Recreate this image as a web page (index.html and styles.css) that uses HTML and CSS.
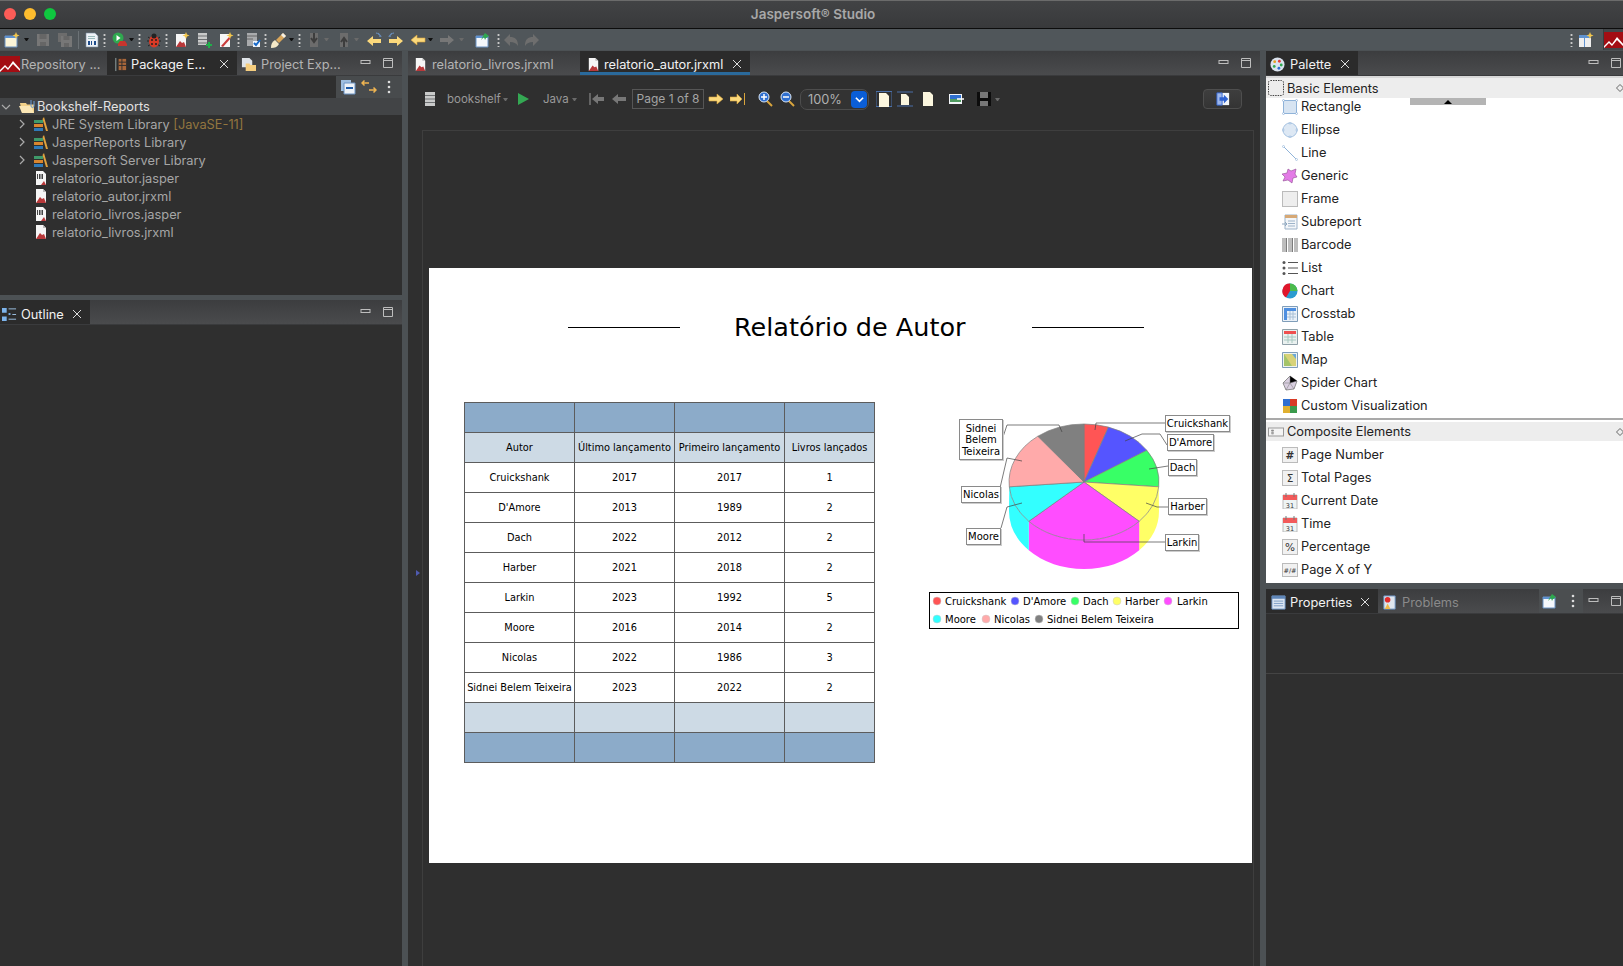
FILE: index.html
```html
<!DOCTYPE html>
<html lang="pt">
<head>
  <meta charset="UTF-8">
  <title>Jaspersoft Studio</title>
  <link rel="stylesheet" href="styles.css">
</head>
<body>
  <!-- icones -->
  <svg class="sprite" xmlns="http://www.w3.org/2000/svg">
    <symbol id="rep" viewBox="0 0 16 16"><path d="M3 1h7l3 3v11H3z" fill="#f6f6f6"/><path d="M10 1v3h3z" fill="#bbb"/><path d="M3 15l4-6 2 2 2-1 2 5z" fill="#b8383a"/></symbol>
    <symbol id="jasper" viewBox="0 0 16 16"><path d="M3 1h7l3 3v11H3z" fill="#f6f6f6"/><path d="M4 4h6v5H4z" fill="#444"/><path d="M5.500 4v5M8 4v5" stroke="#eee"/><path d="M8 15l3-4 2 4z" fill="#b8383a"/></symbol>
    <symbol id="new" viewBox="0 0 16 16"><path d="M1 4h12v11H1z" fill="#fbf5d8" stroke="#6b93c4"/><path d="M1 4h12v2H1z" fill="#5f92d0"/><path d="M12 0l1 2.500 2.500 1-2.500 1-1 2.500-1-2.500-2.500-1 2.500-1z" fill="#f3c74c"/></symbol>
    <symbol id="save" viewBox="0 0 16 16"><path d="M2 2h12v12H2z" fill="#777"/><path d="M4.500 2h7v5h-7zM5 10h6v4H5z" fill="#666"/></symbol>
    <symbol id="saveall" viewBox="0 0 16 16"><path d="M1 1h9v9H1z" fill="#6c6c6c"/><path d="M4 4h11v11H4z" fill="#777"/><path d="M6.500 4h6v4h-6zM7 11h5v4H7z" fill="#666"/></symbol>
    <symbol id="bin" viewBox="0 0 16 16"><path d="M2 1h9l3 3v11H2z" fill="#eef2f7" stroke="#7b8da3" stroke-width=".6"/><path d="M4 4h7v1H4zM4 6h7v1H4z" fill="#9bb"/><path d="M4 9h2v4H4zM7 9h1v4H7zM10 9h2v4h-2z" fill="#1e4d8c"/></symbol>
    <symbol id="run" viewBox="0 0 16 16"><circle cx="6" cy="6" r="5.500" fill="#2fa84f"/><path d="M4.500 3l4 3-4 3z" fill="#fff"/><path d="M6 12l2-3h5l2 3v2H6z" fill="#c8352d"/></symbol>
    <symbol id="bug" viewBox="0 0 16 16"><path d="M2 5l3 2M14 5l-3 2M1 9h3M15 9h-3M2 14l3-2M14 14l-3-2" stroke="#222"/><ellipse cx="8" cy="9.500" rx="5" ry="6" fill="#d83a26"/><circle cx="8" cy="4" r="2.500" fill="#222"/><circle cx="6" cy="8" r="1" fill="#222"/><circle cx="10" cy="8" r="1" fill="#222"/><circle cx="6" cy="12" r="1" fill="#222"/><circle cx="10" cy="12" r="1" fill="#222"/></symbol>
    <symbol id="newrep" viewBox="0 0 16 16"><path d="M2 2h10v13H2z" fill="#f6f6f6"/><path d="M2 15l4-6 2 2 2-1 2 5z" fill="#b8383a"/><path d="M12 0l1 2.500 2.500 1-2.500 1-1 2.500-1-2.500-2.500-1 2.500-1z" fill="#f3c74c"/></symbol>
    <symbol id="dbadd" viewBox="0 0 16 16"><path d="M2 1h9v12H2z" fill="#c9caca"/><path d="M2 4h9M2 7.500h9M2 11h9" stroke="#6e7072"/><path d="M10 12h2v-2h2v2h2v2h-2v2h-2v-2h-2z" fill="#20b04a"/></symbol>
    <symbol id="db" viewBox="0 0 16 16"><path d="M3 1h10v14H3z" fill="#c9caca"/><path d="M3 4.500h10M3 8h10M3 11.500h10" stroke="#6e7072"/></symbol>
    <symbol id="editrep" viewBox="0 0 16 16"><path d="M2 2h10v13H2z" fill="#f6f6f6"/><path d="M3 14L11 5l1.500 1.500L5 15z" fill="#c83a3a"/><path d="M12 0l1 2.500 2.500 1-2.500 1-1 2.500-1-2.500-2.500-1 2.500-1z" fill="#f3c74c"/></symbol>
    <symbol id="server" viewBox="0 0 16 16"><path d="M2 1h10v13H2z" fill="#a9abad"/><path d="M2 4h10M2 7h6" stroke="#666"/><path d="M8 9h7v6H8z" fill="#f2f6fb"/><path d="M9 11l2 2 4-5" stroke="#1769c9" stroke-width="2" fill="none"/></symbol>
    <symbol id="brush" viewBox="0 0 16 16"><path d="M0 16c0-4 1-6 4-8l4 4c-2 3-4 4-8 4z" fill="#f4e9c8"/><path d="M5 8l7-7 3 3-7 7z" fill="#d9a65a"/><path d="M10 3l3 3 2-2-3-3z" fill="#f4f0e6"/></symbol>
    <symbol id="dis1" viewBox="0 0 16 16"><path d="M4 1h8v14H4z" fill="#6c6c6c"/><path d="M8 1v8M5 6l3 4 3-4" stroke="#3d3d3d" stroke-width="2" fill="none"/></symbol>
    <symbol id="dis2" viewBox="0 0 16 16"><path d="M4 1h8v14H4z" fill="#6c6c6c"/><path d="M8 15V7M5 10l3-4 3 4" stroke="#3d3d3d" stroke-width="2" fill="none"/></symbol>
    <symbol id="al" viewBox="0 0 16 16"><path d="M1 8l6-5v3h8v4H7v3z" fill="#fbd97c" stroke="#d9a53d" stroke-width=".6"/></symbol>
    <symbol id="ar" viewBox="0 0 16 16"><path d="M15 8L9 3v3H1v4h8v3z" fill="#fbd97c" stroke="#d9a53d" stroke-width=".6"/></symbol>
    <symbol id="alb" viewBox="0 0 16 16"><path d="M1 9l6-5v3h8v4H7v3z" fill="#fbd97c"/><path d="M10 1c2 0 4 2 4 4M12 1c1 1 3 2 3 4" stroke="#6b93c4" fill="none"/></symbol>
    <symbol id="arb" viewBox="0 0 16 16"><path d="M15 9L9 4v3H1v4h8v3z" fill="#fbd97c"/><path d="M6 1C4 1 2 3 2 5M4 1C3 2 1 3 1 5" stroke="#6b93c4" fill="none"/></symbol>
    <symbol id="gl" viewBox="0 0 16 16"><path d="M1 8l6-5v3h8v4H7v3z" fill="#777"/></symbol>
    <symbol id="gr" viewBox="0 0 16 16"><path d="M15 8L9 3v3H1v4h8v3z" fill="#777"/></symbol>
    <symbol id="glb" viewBox="0 0 16 16"><path d="M3 8l6-5v3h6v4H9v3z" fill="#777"/><path d="M1 2v12" stroke="#777" stroke-width="1.500"/></symbol>
    <symbol id="arb2" viewBox="0 0 16 16"><path d="M12 8L7 3v3H0v4h7v3z" fill="#fbd97c" stroke="#d9a53d" stroke-width=".6"/><path d="M14.500 2v12" stroke="#d9a53d"/></symbol>
    <symbol id="note" viewBox="0 0 16 16"><path d="M1 4h12v11H1z" fill="#f5f8fc" stroke="#6b93c4"/><path d="M1 4h12v2H1z" fill="#5f92d0"/><path d="M10 1l4 3-3 2-1 2-1-3-3 3 2-4z" fill="#2fa84f"/></symbol>
    <symbol id="undo" viewBox="0 0 16 16"><path d="M1 8l6-6v3c5 0 8 2 8 9-2-3-4-4-8-4v4z" fill="#6e6e6e"/></symbol>
    <symbol id="redo" viewBox="0 0 16 16"><path d="M15 8L9 2v3C4 5 1 7 1 14c2-3 4-4 8-4v4z" fill="#6e6e6e"/></symbol>
    <symbol id="persp" viewBox="0 0 16 16"><path d="M1 3h12v12H1z" fill="#eee"/><path d="M1 3h12v3H1zM6 6h1v9H6z" fill="#5f92d0"/><path d="M12 0l1 2.500 2.500 1-2.500 1-1 2.500-1-2.500-2.500-1 2.500-1z" fill="#f3c74c"/></symbol>
    <symbol id="jrs" viewBox="0 0 20 16"><path d="M0 0h20v16H0z" fill="#a30d13"/><path d="M0 14l5-5 3 3 5-7 7 8v2l-7-7-5 6-3-3-5 5z" fill="#fff"/></symbol>
    <symbol id="pkg" viewBox="0 0 16 16"><path d="M3 1v14" stroke="#9aa"/><path d="M6 2h8v12H6z" fill="#a9673a"/><path d="M6 5.500h8M6 9h8M9.500 2v12" stroke="#2e2e2e"/></symbol>
    <symbol id="proj" viewBox="0 0 16 16"><path d="M1 1h8l3 3v7H1z" fill="#dfe3e8"/><path d="M5 7h4l1 1.500h6V15H5z" fill="#f5cd7e"/></symbol>
    <symbol id="collapse" viewBox="0 0 16 16"><path d="M1 1h10v11H1z" fill="#9fbfe0"/><path d="M4 4h11v11H4z" fill="#eef3f8" stroke="#6b93c4"/><path d="M6 9h7" stroke="#1e5ca8" stroke-width="2"/></symbol>
    <symbol id="link" viewBox="0 0 16 16"><path d="M8 4H1M3.500 1.500L1 4l2.500 2.500" stroke="#eeb451" stroke-width="1.500" fill="none"/><path d="M8 11h7M12.500 8.500L15 11l-2.500 2.500" stroke="#eeb451" stroke-width="1.500" fill="none"/></symbol>
    <symbol id="folder" viewBox="0 0 18 16"><path d="M1 4h6l1 1.500h7V14H3z" fill="#f3d188"/><path d="M0 7h12l3 7H3z" fill="#fbe7b5"/><path d="M12 1v6c0 2 3 2 3 0V2" stroke="#6b9bd6" fill="none"/></symbol>
    <symbol id="lib" viewBox="0 0 16 16"><path d="M1 4h9v3H1z" fill="#3f9a6a"/><path d="M1 8h9v3H1z" fill="#d9852e"/><path d="M1 12h9v3H1z" fill="#2f79b7"/><path d="M11 1l4 14h-2L9.500 3z" fill="#e0a23f"/></symbol>
    <symbol id="playg" viewBox="0 0 16 16"><path d="M3 2l11 6-11 6z" fill="#34a853"/></symbol>
    <symbol id="zin" viewBox="0 0 16 16"><path d="M9 10l5 5" stroke="#d9a53d" stroke-width="2"/><circle cx="6" cy="6" r="5" fill="#2f6fd0" stroke="#dbe8f7"/><path d="M3 6h6M6 3v6" stroke="#fff" stroke-width="1.500"/></symbol>
    <symbol id="zout" viewBox="0 0 16 16"><path d="M9 10l5 5" stroke="#d9a53d" stroke-width="2"/><circle cx="6" cy="6" r="5" fill="#2f6fd0" stroke="#dbe8f7"/><path d="M3 6h6" stroke="#fff" stroke-width="1.500"/></symbol>
    <symbol id="pg1" viewBox="0 0 16 16"><path d="M0 .500h16v15H0z" fill="none" stroke="#4a6fa8"/><path d="M3 2h7l3 3v11H3z" fill="#fbf6de"/></symbol>
    <symbol id="pg2" viewBox="0 0 16 16"><path d="M0 1h16M0 15h16" stroke="#4a6fa8"/><path d="M4 3h5l3 3v8H4z" fill="#fbf6de"/></symbol>
    <symbol id="pg3" viewBox="0 0 16 16"><path d="M3 1h7l3 3v11H3z" fill="#fbf6de"/></symbol>
    <symbol id="img" viewBox="0 0 16 16"><path d="M1 3h13v10H1z" fill="#f2f5f9"/><path d="M2 4h11v4H2z" fill="#2f6fd0"/><path d="M2 8h11v3H2z" fill="#4f9a60"/><path d="M9 8h7" stroke="#fff" stroke-width="1.500"/></symbol>
    <symbol id="savek" viewBox="0 0 16 16"><path d="M1 1h14v14H1z" fill="#0c0c0c"/><path d="M4 1h8v6H4zM4 10h8v5H4z" fill="#777"/></symbol>
    <symbol id="exit" viewBox="0 0 16 16"><path d="M5 1h10v14H5z" fill="#f2f5f9"/><path d="M1 1h6v14H1z" fill="#9db6ea" stroke="#2f62d0"/><path d="M4 6h5V3l5 5-5 5v-3H4z" fill="#2f62d0"/></symbol>
    <symbol id="palette" viewBox="0 0 16 16"><circle cx="8" cy="8" r="7.500" fill="#dbe3ee"/><circle cx="5" cy="5" r="1.500" fill="#e8a020"/><circle cx="10" cy="4.500" r="1.500" fill="#e23b3b"/><circle cx="12" cy="8.500" r="1.500" fill="#2fa84f"/><circle cx="9.500" cy="12" r="1.500" fill="#2f6fd0"/><circle cx="4.500" cy="10" r="1.500" fill="#2fa84f"/></symbol>
    <symbol id="props" viewBox="0 0 16 16"><path d="M1 1h14v14H1z" fill="#dce6f2" stroke="#6b93c4"/><path d="M1 1h14v3H1z" fill="#5f86b8"/><path d="M3 6.500h10M3 9h10M3 11.500h10" stroke="#7b9cc4"/></symbol>
    <symbol id="probs" viewBox="0 0 16 16"><path d="M2 1h12v14H2z" fill="#dfe6ee" stroke="#6b93c4"/><circle cx="6" cy="5" r="3" fill="#e22b2b"/><path d="M3 15l3-6 3 6z" fill="#f0b84a"/></symbol>
    <symbol id="outline" viewBox="0 0 16 16"><path d="M0 1h5v5H0zM0 10h5v5H0z" fill="#7db4ec"/><path d="M7 2h8M7 13h8" stroke="#9fc4e8"/><path d="M7 7.500h2" stroke="#7db4ec" stroke-width="2"/><path d="M11 8h4" stroke="#9fc4e8"/></symbol>
    <symbol id="p-rect" viewBox="0 0 16 16"><rect x="1.500" y="1.500" width="13" height="13" fill="#d7e4f2" stroke="#8fb3d9"/><g fill="#fff" stroke="#7ea6d3" stroke-width=".6"><circle cx="1.500" cy="1.500" r="1"/><circle cx="14.500" cy="1.500" r="1"/><circle cx="1.500" cy="14.500" r="1"/><circle cx="14.500" cy="14.500" r="1"/></g></symbol>
    <symbol id="p-ell" viewBox="0 0 16 16"><circle cx="8" cy="8" r="7" fill="#dde8f4" stroke="#a8c4e2"/><g fill="#fff" stroke="#7ea6d3" stroke-width=".6"><circle cx="8" cy="1" r="1"/><circle cx="1" cy="8" r="1"/><circle cx="15" cy="8" r="1"/><circle cx="8" cy="15" r="1"/></g></symbol>
    <symbol id="p-line" viewBox="0 0 16 16"><path d="M1 1l14 14" stroke="#8fb3d9"/><circle cx="1.500" cy="1.500" r="1" fill="#fff" stroke="#8fb3d9" stroke-width=".6"/><circle cx="14.500" cy="14.500" r="1" fill="#fff" stroke="#8fb3d9" stroke-width=".6"/></symbol>
    <symbol id="p-gen" viewBox="0 0 16 16"><path d="M6 1l3 2 5-2-1 5 2 3-4 1-1 5-4-3-5 1 2-4-3-3 5-1z" fill="#e37be6" stroke="#8f4c92" stroke-width=".6"/></symbol>
    <symbol id="p-frame" viewBox="0 0 16 16"><rect x=".5" y=".5" width="15" height="15" fill="#eeeeee" stroke="#bbb"/></symbol>
    <symbol id="p-sub" viewBox="0 0 16 16"><path d="M3 1h12v14H3z" fill="#f3f6f9" stroke="#9db3c9"/><path d="M3 1h12v3H3z" fill="#d6a875"/><path d="M6 7h7M6 9.500h7M6 12h7" stroke="#9db3c9"/><path d="M0 10h5M3 8l2 2-2 2" stroke="#8fa7bf" fill="none"/></symbol>
    <symbol id="p-bar" viewBox="0 0 16 16"><path d="M1 1v14M3 1v14M4.500 1v14M7 1v14M9 1v14M10.500 1v14M13 1v14M15 1v14" stroke="#444" stroke-width=".7"/></symbol>
    <symbol id="p-list" viewBox="0 0 16 16"><circle cx="2" cy="2.500" r="1.500" fill="#555"/><circle cx="2" cy="8" r="1.500" fill="#555"/><circle cx="2" cy="13.500" r="1.500" fill="#555"/><path d="M6 2.500h10M6 8h10M6 13.500h10" stroke="#555"/></symbol>
    <symbol id="p-chart" viewBox="0 0 16 16"><circle cx="8" cy="8" r="7.500" fill="#2b9bd0"/><path d="M8 8V.500A7.500 7.500 0 0 1 15.500 8z" fill="#4cbb4c"/><path d="M8 8V.500A7.500 7.500 0 0 0 4 14.400z" fill="#e0162b"/></symbol>
    <symbol id="p-cross" viewBox="0 0 16 16"><path d="M.5.500h15v15H.5z" fill="#eaf1f8" stroke="#7f9db9"/><path d="M2 2h12v3H2zM2 2h3v12H2z" fill="#4e8fe0"/><path d="M5 8h9M5 11h9M8 5v9M11 5v9" stroke="#a9c0d6"/></symbol>
    <symbol id="p-table" viewBox="0 0 16 16"><path d="M.5.500h15v15H.5z" fill="#eaf1f0" stroke="#8fa0a8"/><path d="M2 2h12v3H2z" fill="#f05050"/><path d="M2 8h12M2 11h12M6 5v9M10 5v9" stroke="#a8c8c0"/></symbol>
    <symbol id="p-map" viewBox="0 0 16 16"><path d="M.5.500h15v15H.5z" fill="#eef2f0" stroke="#7f9db9"/><path d="M2 2h12v12H2z" fill="#a4c46a"/><path d="M2 2l8 12h4V2z" fill="#d8d278"/><path d="M10 2h4v5z" fill="#6aa8d8"/></symbol>
    <symbol id="p-spider" viewBox="0 0 16 16"><path d="M8 1l7 5-3 8-8 1-3-7z" fill="#d9cfe0" stroke="#777" stroke-width=".8"/><path d="M8 1l0 7 7-2M8 8l4 6M8 8l-4 7M8 8L1 8" stroke="#777" stroke-width=".5"/></symbol>
    <symbol id="p-custom" viewBox="0 0 16 16"><path d="M1 1h7v2.500a1.500 1.500 0 0 1 0 2V8H1z" fill="#2f6fd0"/><path d="M8 1h7v7H8z" fill="#d83a26"/><path d="M1 8h7v7H1z" fill="#e0b030"/><path d="M8 8h7v7H8z" fill="#3a9a4c"/></symbol>
    <symbol id="p-box" viewBox="0 0 16 16"><rect x=".5" y=".5" width="15" height="15" fill="#f1f1f1" stroke="#bbb"/></symbol>
    <symbol id="p-cal" viewBox="0 0 16 16"><path d="M1 2h14v14H1z" fill="#eef4f4" stroke="#bbb"/><path d="M1 2h14v5H1z" fill="#f25a5a"/><path d="M4 0v4M12 0v4" stroke="#777"/></symbol>
    <symbol id="p-xy" viewBox="0 0 16 16"><rect x=".5" y="1.500" width="15" height="13" fill="#f1f1f1" stroke="#bbb"/></symbol>
    <symbol id="h-basic" viewBox="0 0 16 16"><rect x=".5" y=".5" width="15" height="15" rx="2" fill="none" stroke="#444" stroke-dasharray="1.500 1"/></symbol>
    <symbol id="h-comp" viewBox="0 0 16 16"><rect x=".5" y="4" width="15" height="8" fill="#f4f4f4" stroke="#999"/><path d="M3 6.500h3M3 9h3M4 5.500v5M5 5.500v5" stroke="#666" stroke-width=".5"/></symbol>
    <symbol id="diamond" viewBox="0 0 8 8"><path d="M4 .500L7.500 4 4 7.500.5 4z" fill="none" stroke="#666"/></symbol>
    <symbol id="close" viewBox="0 0 10 10"><path d="M1 1l8 8M9 1l-8 8" stroke="currentColor"/></symbol>
    <symbol id="min" viewBox="0 0 12 12"><rect x="1" y="3.500" width="9" height="3" fill="none" stroke="#bdbdbd"/></symbol>
    <symbol id="max" viewBox="0 0 12 12"><path d="M1.500 1.500h9v9h-9zM1.500 3.500h9" fill="none" stroke="#bdbdbd"/></symbol>
    <symbol id="vdots" viewBox="0 0 4 14"><circle cx="2" cy="2" r="1.300" fill="#ddd"/><circle cx="2" cy="7" r="1.300" fill="#ddd"/><circle cx="2" cy="12" r="1.300" fill="#ddd"/></symbol>
    <symbol id="chev" viewBox="0 0 10 10"><path d="M3 1l4 4-4 4" fill="none" stroke="#aaa" stroke-width="1.200"/></symbol>
    <symbol id="chevd" viewBox="0 0 10 10"><path d="M1 3l4 4 4-4" fill="none" stroke="#aaa" stroke-width="1.200"/></symbol>
    <symbol id="chevw" viewBox="0 0 10 10"><path d="M1 3l4 4 4-4" fill="none" stroke="#fff" stroke-width="1.800"/></symbol>
  </svg>

  <div class="titlebar">
    <div class="lights"><span class="light red"></span><span class="light amber"></span><span class="light green"></span></div>
    <div class="app-title">Jaspersoft® Studio</div>
  </div>

  <div class="toolbar">
    <svg class="ic"><use href="#new"/></svg><i class="caret t2"></i>
    <svg class="ic"><use href="#save"/></svg>
    <svg class="ic"><use href="#saveall"/></svg>
    <i class="sep t1"></i>
    <svg class="ic t1"><use href="#bin"/></svg>
    <i class="dots t3"></i>
    <svg class="ic"><use href="#run"/></svg><i class="caret t5"></i>
    <i class="dots t2"></i>
    <svg class="ic t1"><use href="#bug"/></svg>
    <i class="dots t3"></i>
    <svg class="ic"><use href="#newrep"/></svg>
    <svg class="ic"><use href="#dbadd"/></svg>
    <svg class="ic"><use href="#editrep"/></svg>
    <i class="dots t3"></i>
    <svg class="ic t1"><use href="#server"/></svg>
    <i class="dots t3"></i>
    <svg class="ic t2"><use href="#brush"/></svg><i class="caret t4"></i>
    <i class="dots t2"></i>
    <svg class="ic t1"><use href="#dis1"/></svg><i class="caret off t4"></i>
    <svg class="ic p1"><use href="#dis2"/></svg><i class="caret off t4"></i>
    <svg class="ic p1"><use href="#alb"/></svg>
    <svg class="ic"><use href="#arb"/></svg>
    <svg class="ic"><use href="#al"/></svg><i class="caret t4"></i>
    <svg class="ic"><use href="#gr"/></svg><i class="caret off t2"></i>
    <svg class="ic p5"><use href="#note"/></svg>
    <i class="dots"></i>
    <svg class="ic t3"><use href="#undo"/></svg>
    <svg class="ic t1"><use href="#redo"/></svg>
    <div class="toolbar-end">
      <i class="dots"></i>
      <svg class="ic"><use href="#persp"/></svg>
      <div class="jrs-cell"><svg class="jrs"><use href="#jrs"/></svg></div>
    </div>
  </div>

  <div class="workbench">
    <!-- coluna esquerda -->
    <div class="col-left">
      <div class="panel panel-explorer">
        <div class="tabbar">
          <div class="tab tab-repo"><svg class="jrs"><use href="#jrs"/></svg><span>Repository ...</span></div>
          <div class="tab active tab-pkg"><svg class="tab-ic"><use href="#pkg"/></svg><span>Package E...</span><svg class="x"><use href="#close"/></svg></div>
          <div class="tab tab-proj"><svg class="tab-ic"><use href="#proj"/></svg><span>Project Exp...</span></div>
          <div class="win-btns"><svg><use href="#min"/></svg><svg><use href="#max"/></svg></div>
        </div>
        <div class="view-bar">
          <div class="view-tools">
            <svg class="ic"><use href="#collapse"/></svg>
            <svg class="ic"><use href="#link"/></svg>
            <svg class="vd"><use href="#vdots"/></svg>
          </div>
        </div>
        <ul class="tree">
          <li class="root"><svg class="tw"><use href="#chevd"/></svg><svg class="folder"><use href="#folder"/></svg>Bookshelf-Reports</li>
          <li><svg class="tw"><use href="#chev"/></svg><svg class="ic"><use href="#lib"/></svg>JRE System Library&nbsp;<span class="deco">[JavaSE-11]</span></li>
          <li><svg class="tw"><use href="#chev"/></svg><svg class="ic"><use href="#lib"/></svg>JasperReports Library</li>
          <li><svg class="tw"><use href="#chev"/></svg><svg class="ic"><use href="#lib"/></svg>Jaspersoft Server Library</li>
          <li><span class="tw"></span><svg class="ic"><use href="#jasper"/></svg>relatorio_autor.jasper</li>
          <li><span class="tw"></span><svg class="ic"><use href="#rep"/></svg>relatorio_autor.jrxml</li>
          <li><span class="tw"></span><svg class="ic"><use href="#jasper"/></svg>relatorio_livros.jasper</li>
          <li><span class="tw"></span><svg class="ic"><use href="#rep"/></svg>relatorio_livros.jrxml</li>
        </ul>
      </div>
      <div class="panel panel-outline">
        <div class="tabbar">
          <div class="tab active tab-outline"><svg class="tab-ic"><use href="#outline"/></svg><span>Outline</span><svg class="x"><use href="#close"/></svg></div>
          <div class="win-btns"><svg><use href="#min"/></svg><svg><use href="#max"/></svg></div>
        </div>
      </div>
    </div>

    <!-- editor -->
    <div class="col-center panel">
      <div class="tabbar">
        <div class="tab tab-livros"><svg class="tab-ic"><use href="#rep"/></svg><span>relatorio_livros.jrxml</span></div>
        <div class="tab active tab-autor"><svg class="tab-ic"><use href="#rep"/></svg><span>relatorio_autor.jrxml</span><svg class="x"><use href="#close"/></svg></div>
        <div class="win-btns"><svg><use href="#min"/></svg><svg><use href="#max"/></svg></div>
      </div>
      <div class="editor-bar">
        <svg class="ic"><use href="#db"/></svg>
        <span class="lbl lbl-db">bookshelf</span><i class="caret off ml6"></i>
        <svg class="ic ml7"><use href="#playg"/></svg>
        <span class="lbl lbl-java">Java</span><i class="caret off ml6"></i>
        <svg class="ic ml12"><use href="#glb"/></svg>
        <svg class="ic ml6"><use href="#gl"/></svg>
        <div class="page-box">Page 1 of 8</div>
        <svg class="ic ml4"><use href="#ar"/></svg>
        <svg class="ic ml6"><use href="#arb2"/></svg>
        <svg class="ic ml12"><use href="#zin"/></svg>
        <svg class="ic ml6"><use href="#zout"/></svg>
        <div class="combo"><span class="combo-val">100%</span><span class="combo-btn"><svg><use href="#chevw"/></svg></span></div>
        <svg class="ic ml7"><use href="#pg1"/></svg>
        <svg class="ic ml5"><use href="#pg2"/></svg>
        <svg class="ic ml7"><use href="#pg3"/></svg>
        <svg class="ic ml12"><use href="#img"/></svg>
        <svg class="ic ml12"><use href="#savek"/></svg><i class="caret off ml3"></i>
        <div class="exit-btn"><svg class="ic"><use href="#exit"/></svg></div>
      </div>
      <div class="canvas">
        <i class="sash-mark"></i>
        <div class="report">
          <div class="report-title"><i class="rule"></i><h1>Relatório de Autor</h1><i class="rule"></i></div>
          <div class="report-body">
            <table class="authors">
              <tr class="band"><td></td><td></td><td></td><td></td></tr>
              <tr class="head"><td>Autor</td><td>Último lançamento</td><td>Primeiro lançamento</td><td>Livros lançados</td></tr>
              <tr><td>Cruickshank</td><td>2017</td><td>2017</td><td>1</td></tr>
              <tr><td>D'Amore</td><td>2013</td><td>1989</td><td>2</td></tr>
              <tr><td>Dach</td><td>2022</td><td>2012</td><td>2</td></tr>
              <tr><td>Harber</td><td>2021</td><td>2018</td><td>2</td></tr>
              <tr><td>Larkin</td><td>2023</td><td>1992</td><td>5</td></tr>
              <tr><td>Moore</td><td>2016</td><td>2014</td><td>2</td></tr>
              <tr><td>Nicolas</td><td>2022</td><td>1986</td><td>3</td></tr>
              <tr><td>Sidnei Belem Teixeira</td><td>2023</td><td>2022</td><td>2</td></tr>
              <tr class="head"><td></td><td></td><td></td><td></td></tr>
              <tr class="band"><td></td><td></td><td></td><td></td></tr>
            </table>
            <svg class="pie" viewBox="0 0 330 240" width="330" height="240">
              <!-- paredes -->
              <path d="M238.700 86.800A75 58 0 0 1 219.200 121.300v29A75 58 0 0 0 239 111z" fill="#ffff66"/>
              <path d="M219.200 121.300A75 58 0 0 1 108.800 121.300v29A75 58 0 0 0 219.200 150.300z" fill="#ff4dff"/>
              <path d="M108.800 121.300A75 58 0 0 1 89.300 86.800L89 111A75 58 0 0 0 108.800 150.300z" fill="#33ffff"/>
              <g stroke="#808080" stroke-width=".7">
                <path d="M164 82V24A75 58 0 0 1 188.400 27.100z" fill="#ff5555"/>
                <path d="M164 82L188.400 27.100A75 58 0 0 1 226.800 50.300z" fill="#5555ff"/>
                <path d="M164 82L226.800 50.300A75 58 0 0 1 238.700 86.800z" fill="#38ff66"/>
                <path d="M164 82L238.700 86.800A75 58 0 0 1 219.200 121.300z" fill="#ffff66"/>
                <path d="M164 82L219.200 121.300A75 58 0 0 1 108.800 121.300z" fill="#ff4dff"/>
                <path d="M164 82L108.800 121.300A75 58 0 0 1 89.300 86.800z" fill="#33ffff"/>
                <path d="M164 82L89.300 86.800A75 58 0 0 1 117.900 36.200z" fill="#ffaaaa"/>
                <path d="M164 82L117.900 36.200A75 58 0 0 1 164 24z" fill="#808080"/>
              </g>
              <!-- linhas das etiquetas -->
              <g class="leaders">
                <path d="M175 30l1-7h70"/>
                <path d="M205 41l17-7h18l7 11"/>
                <path d="M229 69l19-3"/>
                <path d="M226 103l11 4h11"/>
                <path d="M164 134v8h81"/>
                <path d="M102 103l-15 4-6 21"/>
                <path d="M102 61l-15-3-7 30"/>
                <path d="M142 32l-3-7H87l-5 15"/>
              </g>
              <g class="labels">
                <rect x="245.500" y="15.500" width="64" height="16"/><text x="277.500" y="27">Cruickshank</text>
                <rect x="247.500" y="34.500" width="46" height="16"/><text x="270.500" y="46">D'Amore</text>
                <rect x="248.500" y="59.500" width="28" height="16"/><text x="262.500" y="71">Dach</text>
                <rect x="248.500" y="98.500" width="38" height="16"/><text x="267.500" y="110">Harber</text>
                <rect x="245.500" y="134.500" width="33" height="16"/><text x="262" y="146">Larkin</text>
                <rect x="46.500" y="128.500" width="34" height="16"/><text x="63.500" y="140">Moore</text>
                <rect x="41.500" y="86.500" width="39" height="16"/><text x="61" y="98">Nicolas</text>
                <rect x="39.500" y="19.500" width="43" height="40"/><text x="61" y="32">Sidnei</text><text x="61" y="43">Belem</text><text x="61" y="55">Teixeira</text>
              </g>
              <rect x="9.500" y="192.500" width="309" height="36" fill="#fff" stroke="#000"/>
              <g class="legend">
                <circle cx="17" cy="201" r="4" fill="#ff5555"/><text x="25" y="205">Cruickshank</text>
                <circle cx="95" cy="201" r="4" fill="#5555ff"/><text x="103" y="205">D'Amore</text>
                <circle cx="155" cy="201" r="4" fill="#38ff66"/><text x="163" y="205">Dach</text>
                <circle cx="197" cy="201" r="4" fill="#ffff66"/><text x="205" y="205">Harber</text>
                <circle cx="248" cy="201" r="4" fill="#ff4dff"/><text x="257" y="205">Larkin</text>
                <circle cx="17" cy="219" r="4" fill="#33ffff"/><text x="25" y="223">Moore</text>
                <circle cx="66" cy="219" r="4" fill="#ffaaaa"/><text x="74" y="223">Nicolas</text>
                <circle cx="119" cy="219" r="4" fill="#808080"/><text x="127" y="223">Sidnei Belem Teixeira</text>
              </g>
            </svg>
          </div>
        </div>
      </div>
    </div>

    <!-- coluna direita -->
    <div class="col-right">
      <div class="panel panel-palette">
        <div class="tabbar">
          <div class="tab active tab-palette"><svg class="tab-ic"><use href="#palette"/></svg><span>Palette</span><svg class="x"><use href="#close"/></svg></div>
          <div class="win-btns"><svg><use href="#min"/></svg><svg><use href="#max"/></svg></div>
        </div>
        <div class="palette">
          <div class="pal-head"><svg class="ic"><use href="#h-basic"/></svg>Basic Elements<svg class="diamond"><use href="#diamond"/></svg></div>
          <div class="scroll-up"><i></i></div>
          <ul class="pal-list pal-basic">
            <li><svg class="ic"><use href="#p-rect"/></svg>Rectangle</li>
            <li><svg class="ic"><use href="#p-ell"/></svg>Ellipse</li>
            <li><svg class="ic"><use href="#p-line"/></svg>Line</li>
            <li><svg class="ic"><use href="#p-gen"/></svg>Generic</li>
            <li><svg class="ic"><use href="#p-frame"/></svg>Frame</li>
            <li><svg class="ic"><use href="#p-sub"/></svg>Subreport</li>
            <li><svg class="ic"><use href="#p-bar"/></svg>Barcode</li>
            <li><svg class="ic"><use href="#p-list"/></svg>List</li>
            <li><svg class="ic"><use href="#p-chart"/></svg>Chart</li>
            <li><svg class="ic"><use href="#p-cross"/></svg>Crosstab</li>
            <li><svg class="ic"><use href="#p-table"/></svg>Table</li>
            <li><svg class="ic"><use href="#p-map"/></svg>Map</li>
            <li><svg class="ic"><use href="#p-spider"/></svg>Spider Chart</li>
            <li><svg class="ic"><use href="#p-custom"/></svg>Custom Visualization</li>
          </ul>
          <div class="pal-head pal-head2"><svg class="ic"><use href="#h-comp"/></svg>Composite Elements<svg class="diamond"><use href="#diamond"/></svg></div>
          <ul class="pal-list">
            <li><svg class="ic" viewBox="0 0 16 16"><use href="#p-box"/><text class="glyph strong" x="8" y="12">#</text></svg>Page Number</li>
            <li><svg class="ic" viewBox="0 0 16 16"><use href="#p-box"/><text class="glyph" x="8" y="12">Σ</text></svg>Total Pages</li>
            <li><svg class="ic" viewBox="0 0 16 16"><use href="#p-cal"/><text class="glyph small" x="8" y="14.500">31</text></svg>Current Date</li>
            <li><svg class="ic" viewBox="0 0 16 16"><use href="#p-cal"/><text class="glyph small" x="8" y="14.500">31</text></svg>Time</li>
            <li><svg class="ic" viewBox="0 0 16 16"><use href="#p-box"/><text class="glyph" x="8" y="12">%</text></svg>Percentage</li>
            <li><svg class="ic" viewBox="0 0 16 16"><use href="#p-xy"/><text class="glyph small" x="8" y="11">#/#</text></svg>Page X of Y</li>
          </ul>
        </div>
      </div>
      <div class="panel panel-props">
        <div class="tabbar">
          <div class="tab active tab-props"><svg class="tab-ic"><use href="#props"/></svg><span>Properties</span><svg class="x"><use href="#close"/></svg></div>
          <div class="tab tab-probs"><svg class="tab-ic"><use href="#probs"/></svg><span>Problems</span></div>
          <div class="props-tools"><svg class="ic"><use href="#note"/></svg><svg class="vd"><use href="#vdots"/></svg></div>
          <div class="win-btns"><svg><use href="#min"/></svg><svg><use href="#max"/></svg></div>
        </div>
        <div class="props-title"></div>
      </div>
    </div>
  </div>
</body>
</html>
```

FILE: styles.css
```css
* {
  box-sizing: border-box;
  margin: 0;
  padding: 0;
}
html, body {
  height: 100%;
  overflow: hidden;
}
body {
  display: flex;
  flex-direction: column;
  background: #4c5154;
  color: #aaa;
  font-family: Inter, "Noto Sans", sans-serif;
  font-size: 12.8px;
}
.sprite {
  display: block;
  width: 0;
  height: 0;
}
svg {
  display: block;
  flex-shrink: 0;
}
ul {
  list-style: none;
}

/* barra de titulo */
.titlebar {
  height: 29px;
  display: grid;
  grid-template-columns: 1fr auto 1fr;
  align-items: center;
  padding-bottom: 2px;
  background: linear-gradient(#424345, #38393b);
  border-top: 1px solid #6b6b6b;
  border-bottom: 1px solid #0c0c0c;
}
.lights {
  display: flex;
  gap: 8px;
  padding-left: 4px;
}
.light {
  width: 12px;
  height: 12px;
  border-radius: 50%;
}
.light.red { background: #fc5c57; }
.light.amber { background: #fdbc2e; }
.light.green { background: #0fc63f; }
.app-title {
  grid-column: 2;
  padding-left: 3px;
  font-size: 13.5px;
  font-weight: 600;
  color: #a8a8a8;
}

/* barra principal */
.toolbar {
  height: 21px;
  display: flex;
  align-items: center;
  gap: 6px;
  padding-left: 4px;
  background: #50565a;
}
.ic {
  width: 16px;
  height: 16px;
}
.caret {
  width: 5px;
  height: 3px;
  border-left: 2.5px solid transparent;
  border-right: 2.5px solid transparent;
  border-top: 3px solid #111;
  flex-shrink: 0;
}
.caret.off { border-top-color: #6a6a6a; }
.dots {
  width: 3px;
  height: 14px;
  flex-shrink: 0;
  background: radial-gradient(circle, #c8c8c8 1px, transparent 1.2px) 0 0 / 3px 4px;
}
.sep {
  width: 1px;
  height: 18px;
  flex-shrink: 0;
  background: #6c7276;
}
.t1 { margin-left: -1px; }
.t2 { margin-left: -2px; }
.t3 { margin-left: -3px; }
.t4 { margin-left: -4px; }
.t5 { margin-left: -5px; }
.p1 { margin-left: 1px; }
.p5 { margin-left: 5px; }
.ml3 { margin-left: 3px; }
.ml4 { margin-left: 4px; }
.ml5 { margin-left: 5px; }
.ml6 { margin-left: 6px; }
.ml7 { margin-left: 7px; }
.ml12 { margin-left: 12px; }
.toolbar-end {
  margin-left: auto;
  display: flex;
  align-items: center;
  gap: 5px;
}
.jrs-cell {
  width: 20px;
  height: 21px;
  margin-left: 4px;
  display: flex;
  align-items: center;
  background: #43474a;
  border-left: 1px solid #3a3d40;
}
.jrs {
  width: 20px;
  height: 16px;
}

/* areas */
.workbench {
  flex: 1;
  display: flex;
  min-height: 0;
  padding-top: 1px;
}
.panel {
  display: flex;
  flex-direction: column;
  background: #2f2f2f;
}
.col-left {
  width: 402px;
  display: flex;
  flex-direction: column;
  gap: 5px;
}
.panel-explorer { height: 244px; }
.panel-outline { flex: 1; }
.col-center {
  width: 852px;
  margin-left: 6px;
}
.col-right {
  width: 357px;
  margin-left: 6px;
  display: flex;
  flex-direction: column;
  gap: 6px;
}
.panel-palette { height: 532px; }
.panel-props { flex: 1; }

/* abas */
.tabbar {
  height: 25px;
  flex-shrink: 0;
  display: flex;
  align-items: stretch;
  background: linear-gradient(#3c3d3f, #4a4b4d);
  border-bottom: 1px solid #3a3b3d;
}
.tab {
  display: flex;
  align-items: center;
  color: #b4b4b4;
  white-space: nowrap;
  padding-top: 2px;
}
.tab.active {
  background: #2b2b2b;
  color: #f2f2f2;
}
.tab-ic {
  width: 15px;
  height: 15px;
}
.x {
  width: 10px;
  height: 10px;
  margin-left: auto;
  color: #ddd;
}
.win-btns {
  margin-left: auto;
  display: flex;
  align-items: center;
  gap: 10px;
  padding-right: 8px;
}
.win-btns svg {
  width: 12px;
  height: 12px;
}
.col-right .win-btns {
  padding-right: 1px;
}
.tab-repo { width: 107px; gap: 1px; }
.tab-pkg { width: 130px; gap: 3px; padding-left: 6px; padding-right: 8px; }
.tab-proj { gap: 5px; padding-left: 4px; }
.tab-outline { width: 90px; gap: 4px; padding: 4px 8px 0 2px; }
.tab-livros { width: 172px; gap: 4px; padding-left: 5px; }
.tab-autor {
  width: 170px;
  gap: 3px;
  padding-left: 6px;
  padding-right: 8px;
  box-shadow: inset 0 -3px 0 #2a6a9c;
}
.tab-palette { width: 92px; gap: 5px; padding-left: 4px; padding-right: 8px; }
.tab-props { width: 112px; gap: 4px; padding-left: 5px; padding-right: 8px; }
.tab-probs { gap: 5px; padding-left: 4px; color: #8a8a8a; }

/* explorador */
.view-bar {
  height: 22px;
  flex-shrink: 0;
  display: flex;
  justify-content: flex-end;
}
.view-tools {
  width: 66px;
  display: flex;
  align-items: center;
  gap: 5px;
  padding-left: 4px;
  background: #484b4d;
}
.vd {
  width: 4px;
  height: 14px;
  margin-left: 5px;
}
.tree li {
  height: 18px;
  display: flex;
  align-items: center;
  color: #a6a6a6;
  white-space: nowrap;
}
.tree li.root {
  background: #424446;
  color: #e2e2e2;
  height: 17px;
}
.tw {
  width: 10px;
  height: 10px;
  margin: 0 6px 0 17px;
  flex-shrink: 0;
}
.tree .ic {
  margin-right: 3px;
}
.root .tw {
  margin: 0 8px 0 1px;
}
.folder {
  width: 18px;
  height: 16px;
}
.deco {
  color: #93763f;
}

/* barra do editor */
.editor-bar {
  height: 54px;
  flex-shrink: 0;
  display: flex;
  align-items: center;
  padding: 0 18px 8px 14px;
}
.editor-bar .lbl {
  color: #9a9a9a;
  font-size: 11.5px;
}
.lbl-db { width: 50px; margin-left: 9px; }
.lbl-java { width: 23px; margin-left: 12px; }
.page-box {
  width: 72px;
  height: 20px;
  margin-left: 5px;
  border: 1px solid #565656;
  color: #a4a4a4;
  text-align: center;
  font-size: 12px;
  line-height: 18px;
}
.combo {
  width: 69px;
  height: 21px;
  margin-left: 4px;
  display: flex;
  align-items: center;
  justify-content: space-between;
  padding: 0 1px 0 7px;
  border: 1px solid #4d4d4d;
  border-radius: 7px;
  background: #333;
  color: #b0b0b0;
}
.combo-btn {
  width: 16px;
  height: 17px;
  display: flex;
  align-items: center;
  justify-content: center;
  border-radius: 4px;
  background: #0a5ed7;
}
.combo-btn svg {
  width: 9px;
  height: 9px;
}
.exit-btn {
  width: 39px;
  height: 20px;
  margin-left: auto;
  display: flex;
  align-items: center;
  justify-content: center;
  border: 1px solid #4e4e4e;
  border-radius: 4px;
  background: linear-gradient(#3e3e3e, #343434);
}
.exit-btn .ic {
  width: 14px;
  height: 14px;
}

/* area do relatorio */
.canvas {
  position: relative;
  flex: 1;
  margin: 0 6px 0 14px;
  padding: 137px 1px 0 6px;
  border: 1px solid #3e3e3e;
  border-bottom: 0;
}
.sash-mark {
  position: absolute;
  left: -7px;
  top: 439px;
  border-left: 4px solid #4f5bb0;
  border-top: 3px solid transparent;
  border-bottom: 3px solid transparent;
}
.report {
  width: 823px;
  height: 595px;
  background: #fff;
  color: #000;
  font-family: "DejaVu Sans", sans-serif;
}
.report-title {
  display: flex;
  align-items: center;
  height: 118px;
  padding: 0 0 0 139px;
  margin-bottom: 16px;
}
.report-title h1 {
  width: 231px;
  margin: 0 67px 0 54px;
  font-size: 25.5px;
  font-weight: 400;
  white-space: nowrap;
  text-align: center;
}
.rule {
  width: 112px;
  border-top: 1px solid #000;
}
.report-body {
  display: flex;
  align-items: flex-start;
  padding-left: 35px;
}
.authors {
  width: 411px;
  height: 361px;
  border-collapse: collapse;
  table-layout: fixed;
  font-size: 9.8px;
  text-align: center;
}
.authors td {
  height: 30px;
  padding: 0 0 1px;
  border: 1px solid #5c5c5c;
  white-space: nowrap;
}
.authors td:nth-child(1) { width: 110px; }
.authors td:nth-child(2) { width: 100px; }
.authors td:nth-child(3) { width: 110px; }
.authors .band td { background: #8cabc9; }
.authors .head td { background: #cddae5; }
.pie {
  margin: -2px 0 0 45px;
  font-size: 10px;
}
.leaders path {
  fill: none;
  stroke: #444;
  stroke-width: .7;
}
.labels rect {
  fill: #fff;
  stroke: #8a8a8a;
  filter: drop-shadow(1px 1px 0 #ccc);
}
.labels text {
  text-anchor: middle;
  fill: #000;
}
.legend circle {
  stroke: #ccc;
  stroke-width: .5;
}

/* paleta */
.palette {
  position: relative;
  flex: 1;
  background: #fff;
  border-top: 2px solid #d8d8d8;
  color: #222;
}
.pal-head {
  position: relative;
  z-index: 1;
  height: 20px;
  display: flex;
  align-items: center;
  gap: 3px;
  padding-left: 2px;
  background: #ededed;
}
.pal-head2 {
  height: 23px;
  border-top: 2px solid #a9a9a9;
  box-shadow: inset 0 2px 0 #fff;
  padding-top: 2px;
}
.diamond {
  width: 8px;
  height: 8px;
  margin-left: auto;
  margin-right: -1px;
}
.scroll-up {
  position: absolute;
  left: 144px;
  top: 20px;
  z-index: 2;
  width: 76px;
  height: 7px;
  display: flex;
  justify-content: center;
  align-items: center;
  background: #b4b4b4;
}
.scroll-up i {
  border-left: 4px solid transparent;
  border-right: 4px solid transparent;
  border-bottom: 4px solid #000;
}
.pal-list {
  padding-top: 2px;
}
.pal-basic {
  margin-top: -3px;
  margin-bottom: 1px;
  padding-top: 0;
}
.pal-list li {
  height: 23px;
  display: flex;
  align-items: center;
  gap: 3px;
  padding-left: 16px;
}
.glyph {
  font-family: "DejaVu Sans", sans-serif;
  font-size: 10.5px;
  text-anchor: middle;
  fill: #333;
}
.glyph.strong {
  font-weight: 700;
}
.glyph.small {
  font-size: 6.5px;
}

/* propriedades */
.props-tools {
  width: 44px;
  margin-left: auto;
  display: flex;
  align-items: center;
  gap: 13px;
  padding-left: 3px;
  background: #4b4e50;
}
.props-tools .vd {
  margin-left: 0;
}
.props-tools + .win-btns {
  margin-left: 0;
  padding-left: 5px;
}
.props-title {
  height: 60px;
  border-bottom: 1px solid #444;
}
```
